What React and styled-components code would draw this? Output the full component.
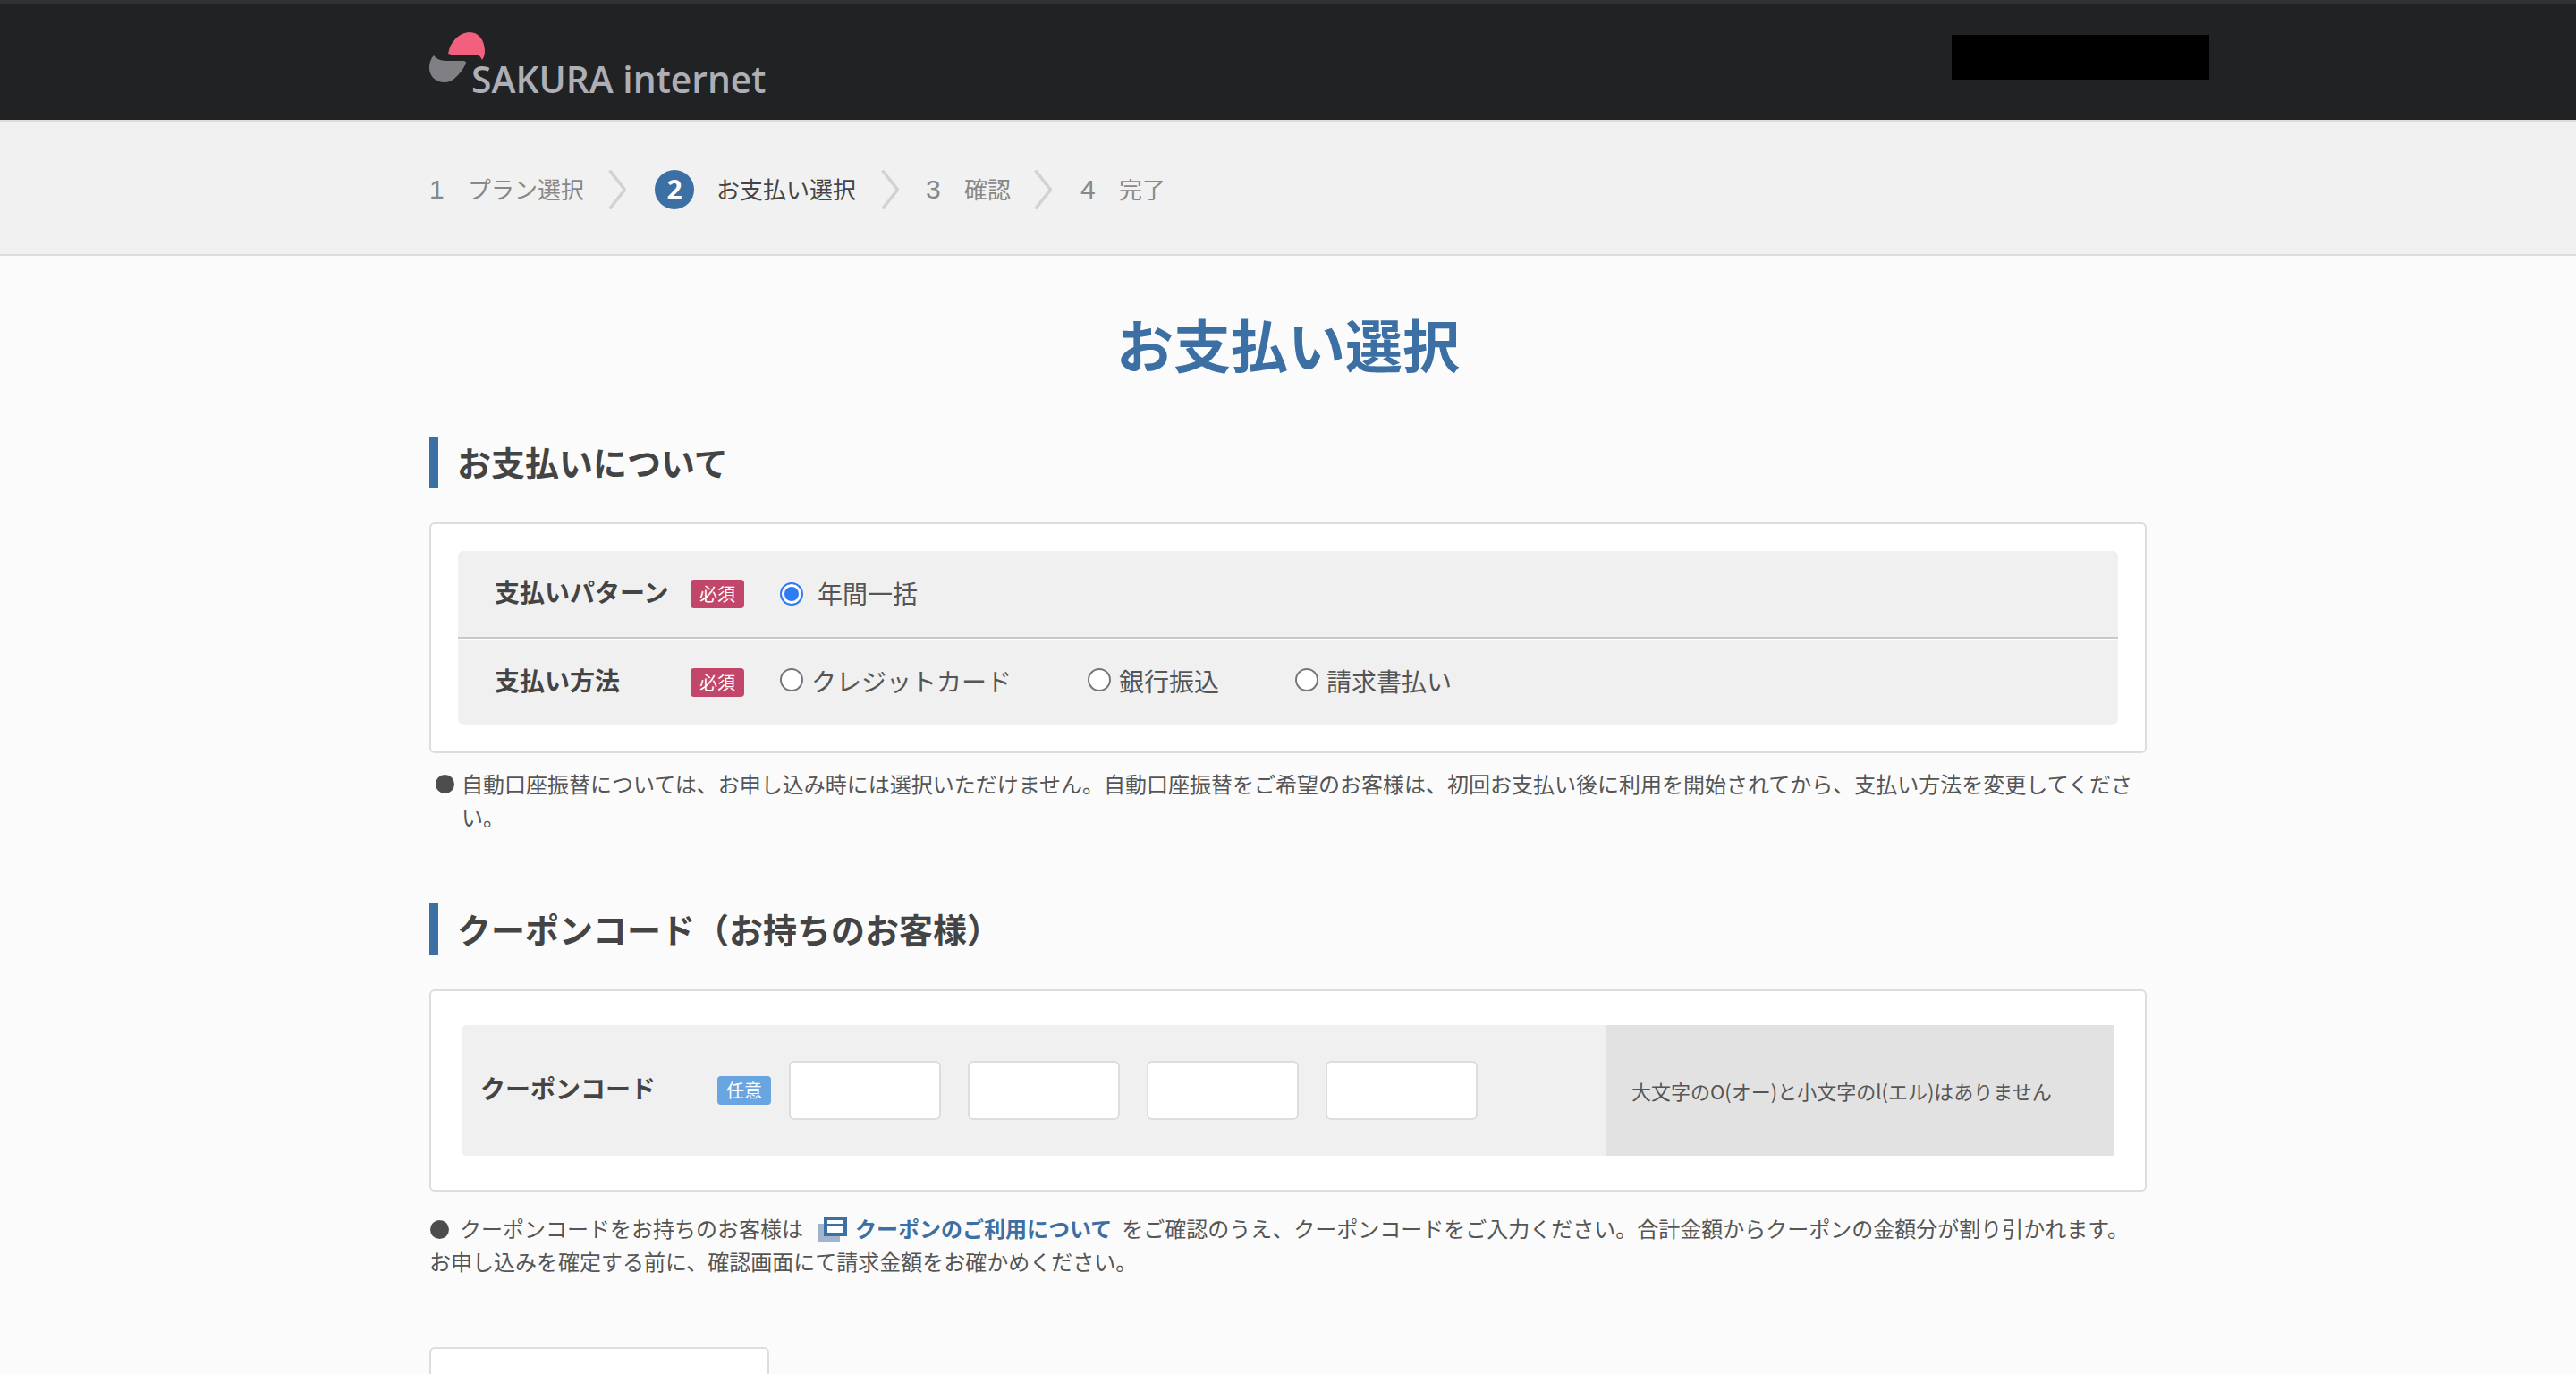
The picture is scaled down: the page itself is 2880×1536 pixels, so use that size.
import React from 'react';
import styled, { createGlobalStyle } from 'styled-components';

const BLUE = '#3c6fa3';
const JP = '"Noto Sans CJK JP", "Noto Sans", sans-serif';

const GlobalStyle = createGlobalStyle`
  html, body {
    margin: 0;
    padding: 0;
    background: #fbfbfb;
  }
  body {
    height: 1536px;
    overflow: hidden;
    font-family: ${JP};
    color: #555;
  }
`;

const Header = styled.header`
  box-sizing: border-box;
  height: 134px;
  padding: 0 410px 0 480px;
  display: flex;
  justify-content: space-between;
  align-items: flex-start;
  background: #212224;
  border-top: 4px solid #303135;
`;

const Logo = styled.div`
  display: flex;
  align-items: flex-start;
  margin-top: 32px;
`;

const LogoMark = styled.svg`
  width: 62px;
  height: 56px;
  flex: none;
`;

const LogoText = styled.span`
  margin: 28px 0 0 -15px;
  font-family: "Open Sans", sans-serif;
  font-size: 40.8px;
  font-weight: 600;
  line-height: 48px;
  color: #aeaeb6;
  white-space: nowrap;
`;

const Masked = styled.div`
  width: 288px;
  height: 50px;
  margin-top: 35px;
  background: #000;
`;

const StepBar = styled.nav`
  box-sizing: border-box;
  height: 152px;
  padding-top: 4px;
  background: #f1f1f1;
  border-top: 2px solid #ddd;
  border-bottom: 2px solid #ddd;
  display: flex;
  align-items: center;
`;

const StepList = styled.ol`
  width: 1920px;
  margin: 0 auto;
  padding: 0;
  list-style: none;
  display: flex;
  align-items: center;
`;

const Step = styled.li`
  display: flex;
  align-items: center;
  gap: ${({ $active }) => ($active ? '25px' : '29px')};
  font-size: 26px;
  line-height: 44px;
  color: ${({ $active }) => ($active ? '#444' : '#888')};
`;

const StepLabel = styled.span`
  margin-bottom: 3px;
`;

const StepNumber = styled.span`
  width: 14px;
  font-family: "Liberation Sans", sans-serif;
  font-size: 30px;
  text-align: center;
`;

const StepCircle = styled.span`
  width: 44px;
  height: 44px;
  border-radius: 50%;
  background: ${BLUE};
  color: #fff;
  font-family: "Open Sans", sans-serif;
  font-size: 30px;
  font-weight: 700;
  display: flex;
  align-items: center;
  justify-content: center;
`;

const Chevron = styled.svg`
  width: 20px;
  height: 44px;
  flex: none;
  margin: 0 ${({ $after }) => $after}px 0 ${({ $before }) => $before}px;
`;

const Main = styled.main`
  width: 1920px;
  margin: 0 auto;
`;

const Title = styled.h1`
  margin: 65px 0 73px;
  font-size: 64px;
  font-weight: 700;
  line-height: 64px;
  text-align: center;
  color: ${BLUE};
`;

const SectionHeading = styled.h2`
  box-sizing: border-box;
  height: 58px;
  margin: 0 0 38px;
  padding: 0 0 3px 21px;
  display: flex;
  align-items: center;
  border-left: 10px solid ${BLUE};
  font-size: 38px;
  font-weight: 700;
  color: #444;
`;

const Card = styled.section`
  padding: ${({ $pad }) => $pad};
  background: #fff;
  border: 2px solid #ddd;
  border-radius: 6px;
`;

const FormTable = styled.div`
  border-radius: 6px;
  overflow: hidden;
`;

const FormRow = styled.div`
  box-sizing: border-box;
  height: ${({ $h }) => $h}px;
  padding-left: 41px;
  display: flex;
  align-items: center;
  background: #f0f0f0;
`;

const RowRule = styled.div`
  height: 2px;
  margin-bottom: 2px;
  background: #c8c8c8;
`;

const RowLabel = styled.div`
  width: ${({ $w }) => $w}px;
  margin-bottom: 7px;
  font-size: 28px;
  font-weight: 700;
  color: #444;
`;

const Badge = styled.span`
  width: 60px;
  height: 32px;
  flex: none;
  border-radius: 4px;
  background: ${({ $optional }) => ($optional ? '#69a5e0' : '#c2456a')};
  color: #fff;
  font-size: 20px;
  line-height: 32px;
  text-align: center;
`;

const RadioGroup = styled.div`
  margin-left: 40px;
  display: flex;
  gap: 85px;
`;

const RadioLabel = styled.label`
  display: flex;
  align-items: center;
  gap: ${({ $gap }) => $gap}px;
  margin-bottom: ${({ $up }) => $up}px;
  font-size: 28px;
  line-height: 40px;
  color: #555;
`;

const Radio = styled.input.attrs({ type: 'radio', readOnly: true })`
  appearance: none;
  box-sizing: border-box;
  width: 26px;
  height: 26px;
  margin: 0 0 ${({ $lift }) => $lift}px;
  border: 2px solid #767676;
  border-radius: 50%;
  background: #fff;
  &:checked {
    border: 2px solid #2f7bf6;
    background: #2f7bf6;
    box-shadow: inset 0 0 0 3px #fff;
  }
`;

const Note = styled.div`
  margin: 15px 0 79px;
  display: flex;
  align-items: flex-start;
  font-size: 24px;
  line-height: 37px;
  color: #555;
`;

const NoteBullet = styled.span`
  width: 21px;
  height: 21px;
  flex: none;
  margin: 9px 8px 0 7px;
  border-radius: 50%;
  background: #4d4d4d;
`;

const NoteText = styled.p`
  margin: 0;
  flex: 1;
`;

const CouponRow = styled.div`
  height: 146px;
  display: flex;
`;

const CouponFields = styled.div`
  flex: 1;
  padding-left: 21px;
  display: flex;
  align-items: center;
  background: #f0f0f0;
  border-radius: 6px 0 0 6px;
`;

const CodeInputs = styled.div`
  margin-left: 20px;
  display: flex;
  gap: 30px;
`;

const CodeInput = styled.input`
  box-sizing: border-box;
  width: 170px;
  height: 66px;
  padding: 0;
  background: #fff;
  border: 2px solid #ddd;
  border-radius: 6px;
`;

const CouponHint = styled.div`
  box-sizing: border-box;
  width: 568px;
  padding-left: 28px;
  display: flex;
  align-items: center;
  background: #e2e2e2;
  font-size: 22px;
  color: #555;
`;

const CouponNote = styled.p`
  margin: 22px 0 78px;
  font-size: 24px;
  line-height: 37px;
  color: #555;
  white-space: nowrap;
`;

const InlineBullet = styled.span`
  display: inline-block;
  width: 21px;
  height: 21px;
  margin: 0 12px 0 1px;
  border-radius: 50%;
  background: #4d4d4d;
  vertical-align: -2px;
`;

const GuideLink = styled.a`
  margin: 0 11px 0 17px;
  font-weight: 700;
  color: ${BLUE};
`;

const LinkIcon = styled.svg`
  width: 32px;
  height: 28px;
  margin-right: 9px;
  vertical-align: -5px;
`;

const NextBox = styled.div`
  box-sizing: border-box;
  width: 380px;
  height: 120px;
  background: #fff;
  border: 2px solid #ddd;
  border-radius: 6px;
`;

const StepChevron = ({ before, after }) => (
  <Chevron $before={before} $after={after} viewBox="0 0 20 44">
    <path d="M1.5 0.5 L18.5 22 L1.5 43.5" fill="none" stroke="#d2d2d2" strokeWidth="3.5" />
  </Chevron>
);

export default function App() {
  return (
    <>
      <GlobalStyle />
      <Header>
        <Logo>
          <LogoMark viewBox="0 0 62 56">
            <path
              d="M21.5 22.5 C23 11 34 0 45 0 C55 0 62 9 62 21 C62 25 61 28 59 31 C57.5 27 55 25 51 25 L25 25 C22 25 20.5 24.5 21.5 22.5 Z"
              fill="#f2607e"
            />
            <path
              d="M5 26 C7 29 12 32 19 32 L38 32 C41 32 41.5 34 40.5 36 C36 44 28 56 17 56 C7 56 0 49 0 40 C0 34 2 29 5 26 Z"
              fill="#808084"
            />
          </LogoMark>
          <LogoText>SAKURA internet</LogoText>
        </Logo>
        <Masked />
      </Header>

      <StepBar>
        <StepList>
          <Step>
            <StepNumber>1</StepNumber>
            <StepLabel>プラン選択</StepLabel>
          </Step>
          <StepChevron before={27} after={32} />
          <Step $active>
            <StepCircle>2</StepCircle>
            <StepLabel>お支払い選択</StepLabel>
          </Step>
          <StepChevron before={28} after={30} />
          <Step>
            <StepNumber>3</StepNumber>
            <StepLabel>確認</StepLabel>
          </Step>
          <StepChevron before={26} after={32} />
          <Step>
            <StepNumber>4</StepNumber>
            <StepLabel>完了</StepLabel>
          </Step>
        </StepList>
      </StepBar>

      <Main>
        <Title>お支払い選択</Title>

        <SectionHeading>お支払いについて</SectionHeading>
        <Card $pad="30px">
          <FormTable>
            <FormRow $h={96}>
              <RowLabel $w={219}>支払いパターン</RowLabel>
              <Badge>必須</Badge>
              <RadioGroup>
                <RadioLabel $gap={16} $up={3}>
                  <Radio name="pattern" defaultChecked $lift={-3} />
                  年間一括
                </RadioLabel>
              </RadioGroup>
            </FormRow>
            <RowRule />
            <FormRow $h={94}>
              <RowLabel $w={219}>支払い方法</RowLabel>
              <Badge>必須</Badge>
              <RadioGroup>
                <RadioLabel $gap={9} $up={5}>
                  <Radio name="method" $lift={1} />
                  クレジットカード
                </RadioLabel>
                <RadioLabel $gap={9} $up={5}>
                  <Radio name="method" $lift={1} />
                  銀行振込
                </RadioLabel>
                <RadioLabel $gap={9} $up={5}>
                  <Radio name="method" $lift={1} />
                  請求書払い
                </RadioLabel>
              </RadioGroup>
            </FormRow>
          </FormTable>
        </Card>
        <Note>
          <NoteBullet />
          <NoteText>
            自動口座振替については、お申し込み時には選択いただけません。自動口座振替をご希望のお客様は、初回お支払い後に利用を開始されてから、支払い方法を変更してください。
          </NoteText>
        </Note>

        <SectionHeading>クーポンコード（お持ちのお客様）</SectionHeading>
        <Card $pad="38px 34px">
          <CouponRow>
            <CouponFields>
              <RowLabel $w={265}>クーポンコード</RowLabel>
              <Badge $optional>任意</Badge>
              <CodeInputs>
                <CodeInput />
                <CodeInput />
                <CodeInput />
                <CodeInput />
              </CodeInputs>
            </CouponFields>
            <CouponHint>大文字のO(オー)と小文字のl(エル)はありません</CouponHint>
          </CouponRow>
        </Card>
        <CouponNote>
          <InlineBullet />
          クーポンコードをお持ちのお客様は
          <GuideLink>
            <LinkIcon viewBox="0 0 32 28">
              <rect x="0" y="8" width="24" height="20" fill="#a0b4cc" />
              <rect x="8" y="2" width="22" height="18" fill="#fff" stroke={BLUE} strokeWidth="4" />
              <rect x="8" y="8" width="22" height="3" fill={BLUE} />
            </LinkIcon>
            クーポンのご利用について
          </GuideLink>
          をご確認のうえ、クーポンコードをご入力ください。合計金額からクーポンの金額分が割り引かれます。
          <br />
          お申し込みを確定する前に、確認画面にて請求金額をお確かめください。
        </CouponNote>
        <NextBox />
      </Main>
    </>
  );
}
